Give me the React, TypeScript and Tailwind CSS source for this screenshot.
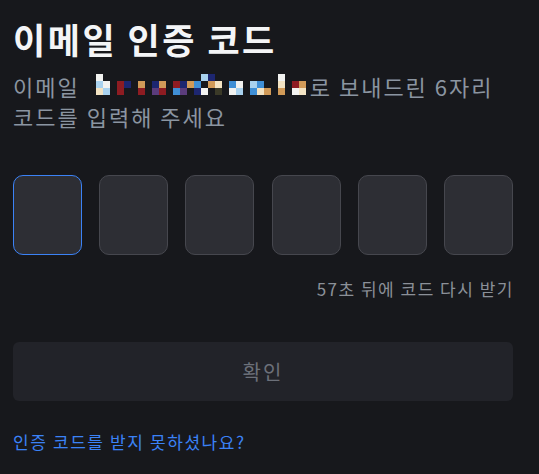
import React from "react";

const palette: Record<string, string> = {
  w: "#f2f2f0",
  c: "#f3e3c3",
  b: "#3f8fd6",
  n: "#1d2670",
  r: "#8e1c22",
  o: "#d19a58",
  p: "#5b3c7c",
  l: "#a9d2ef",
  g: "#3b3a28",
};

const rows = [
  "w..............ln.........w...",
  "lw.rn.o.no.rnob.oc.bw.lb..c.ro",
  "cl.r..r.pr.bp.nw.g.wl.bco.o.wc",
];

function Mosaic() {
  return (
    <span className="inline-flex flex-col align-middle ml-[16px] mr-[4px] translate-y-[-6px]">
      {rows.map((row, i) => (
        <span key={i} className="flex">
          {row.split("").map((ch, j) => (
            <span
              key={j}
              className="block w-[7px] h-[7px]"
              style={{ backgroundColor: palette[ch] ?? "transparent" }}
            />
          ))}
        </span>
      ))}
    </span>
  );
}

export default function App() {
  const boxes = [0, 1, 2, 3, 4, 5];
  return (
    <div
      className="w-[539px] h-[474px] bg-[#17181c] pl-[13px] pr-[26px] pt-[17px] overflow-hidden"
      style={{ fontFamily: '"Noto Sans CJK KR", "Noto Sans", sans-serif' }}
    >
      <h1 className="text-[35px] leading-[44px] font-bold text-[#f4f5f7] tracking-[2.5px]">
        이메일 인증 코드
      </h1>
      <p className="mt-[10px] text-[22px] leading-[30px] text-[#8b95a1] tracking-[2px] whitespace-nowrap">
        이메일<Mosaic />로 보내드린 6자리
        <br />
        코드를 입력해 주세요
      </p>
      <div className="mt-[44px] flex justify-between">
        {boxes.map((i) => (
          <div
            key={i}
            className={
              i === 0
                ? "w-[69px] h-[80px] rounded-[10px] bg-[#2d2e34] border border-[#3b82f6]"
                : "w-[69px] h-[80px] rounded-[10px] bg-[#2d2e34] border border-[#46474e]"
            }
          />
        ))}
      </div>
      <div className="mt-[22px] flex justify-end text-[17px] leading-[24px] text-[#8b9098] tracking-[1.5px] mr-[-1px]">
        57초 뒤에 코드 다시 받기
      </div>
      <button className="mt-[41px] w-full h-[59px] rounded-[6px] bg-[#222329] text-[20px] text-[#6c7079] tracking-[2px] flex items-center justify-center">
        확인
      </button>
      <div className="mt-[29px] text-[17px] leading-[24px] text-[#3b82f6] tracking-[1.6px]">
        인증 코드를 받지 못하셨나요?
      </div>
    </div>
  );
}
